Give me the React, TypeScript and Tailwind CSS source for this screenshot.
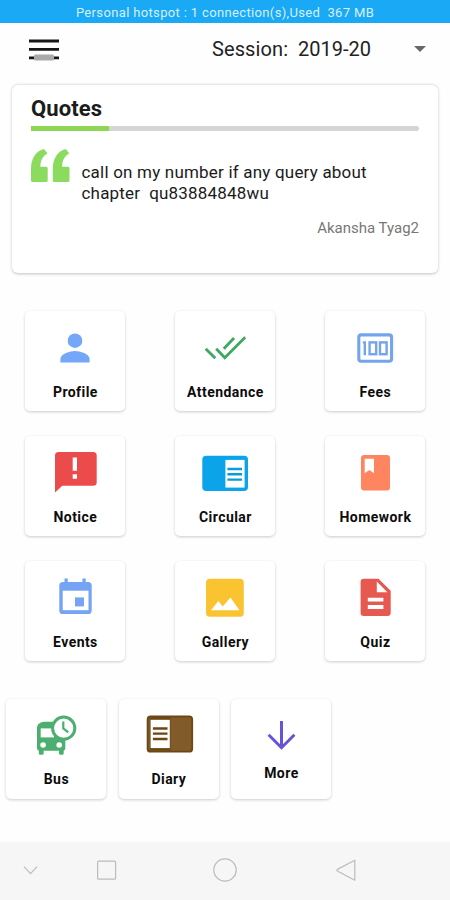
import type { ReactNode } from "react";

type TileProps = { label: string; icon: ReactNode; labelClass?: string };

function Icon({ children }: { children: ReactNode }) {
  return (
    <svg viewBox="0 0 60 60" className="mt-[7px] size-[60px] shrink-0" fill="none">
      {children}
    </svg>
  );
}

function Tile({ label, icon, labelClass = "mt-[6px]" }: TileProps) {
  return (
    <div className="flex h-[100px] w-[100px] flex-col items-center rounded-[5px] bg-white shadow-[0_1px_3px_rgba(0,0,0,0.2)]">
      <Icon>{icon}</Icon>
      <span className={`pl-[0.8px] text-[14px] leading-[16px] font-bold tracking-[0.45px] whitespace-nowrap text-[#0c0c0c] ${labelClass}`}>
        {label}
      </span>
    </div>
  );
}

const profile = (
  <g fill="#74a7f8">
    <circle cx="30" cy="22.7" r="7.3" />
    <path d="M15.4 44.5v-3.6c0-4.9 9.7-7.9 14.6-7.9s14.6 3 14.6 7.9v3.6z" />
  </g>
);

const attendance = (
  <g stroke="#3fa860" strokeWidth="2.8">
    <path d="M10.7 30.7 20.3 40.3M21.2 30.7l8.6 9L50.2 19.3M28.8 30.8 39 20" />
  </g>
);

const fees = (
  <g stroke="#74a4ee">
    <rect x="13.8" y="16.9" width="32.8" height="26.4" rx="2.5" strokeWidth="3.1" />
    <path d="M17.8 24.4h2v12.8" strokeWidth="2.4" />
    <rect x="24.6" y="24.4" width="6.6" height="11.8" strokeWidth="2.4" />
    <rect x="35" y="24.4" width="6.6" height="11.8" strokeWidth="2.4" />
  </g>
);

const notice = (
  <>
    <path d="M10 12.5A3.5 3.5 0 0 1 13.5 9h34.7a3.5 3.5 0 0 1 3.5 3.5v26.7a3.5 3.5 0 0 1-3.5 3.5H17.3L10 49.6z" fill="#eb4b4b" />
    <path d="M27.7 14.5H32v13.2h-4.3zM27.7 31.3H32v4.4h-4.3z" fill="#fff" />
  </>
);

const circular = (
  <>
    <rect x="7.3" y="12.7" width="45.7" height="35.4" rx="4" fill="#0ba4ea" />
    <path d="M30.4 16.9h19.2v27.7H30.4z" fill="#fff" />
    <path d="M32.4 26H47M32.4 31.3H47M32.4 36.6H47" stroke="#0b9bdc" strokeWidth="2.4" />
  </>
);

const homework = (
  <>
    <rect x="16" y="12.1" width="29" height="35.3" rx="3.2" fill="#fe8560" />
    <path d="M19.7 15.8H29v14.4L24.4 27l-4.7 3.2z" fill="#fff" />
  </>
);

const events = (
  <>
    <path d="M19.5 10.4h3.3V14h14.6v-3.6h3.3V14h2.4a3.6 3.6 0 0 1 3.6 3.6v24.8a3.6 3.6 0 0 1-3.6 3.6H17.9a3.6 3.6 0 0 1-3.6-3.6V17.6a3.6 3.6 0 0 1 3.6-3.6h1.6z" fill="#74a4f3" />
    <path d="M17.7 22.7h25.8v19.5H17.7z" fill="#fff" />
    <path d="M30 29.4h9v9h-9z" fill="#74a4f3" />
  </>
);

const gallery = (
  <>
    <rect x="11" y="10.7" width="37.8" height="38" rx="3.8" fill="#fac431" />
    <path d="m16 42.3 7.3-9.3 4.4 5.6 7.8-9L44.4 42.3z" fill="#fff" />
  </>
);

const quiz = (
  <>
    <path d="M18.9 10.7h14.6l12.2 12.1v22a3.3 3.3 0 0 1-3.3 3.3H18.9a3.3 3.3 0 0 1-3.3-3.3V14a3.3 3.3 0 0 1 3.3-3.3z" fill="#e65850" />
    <path d="M31.8 13.6v10.6h10.6zM22.8 29.7h15.6v3.8H22.8zM22.8 37.1h15.6v3.8H22.8z" fill="#fff" />
  </>
);

const bus = (
  <>
    <path d="M11 22c0-4.5 4-6.3 9-6.3h19.3v26.5a3 3 0 0 1-1.6 2.6v2.4a1.5 1.5 0 0 1-1.5 1.5h-1.7a1.5 1.5 0 0 1-1.5-1.5v-2.4H17.7v2.4a1.5 1.5 0 0 1-1.5 1.5h-1.9a1.5 1.5 0 0 1-1.5-1.5v-2.4A3 3 0 0 1 11 42.2z" fill="#4caf70" />
    <path d="M14.7 22.4H28v9H14.7z" fill="#fff" />
    <circle cx="17.1" cy="39" r="2.8" fill="#fff" />
    <circle cx="33.2" cy="39" r="2.8" fill="#fff" />
    <circle cx="37.7" cy="22.2" r="11.1" fill="#fff" stroke="#4caf70" strokeWidth="3" />
    <path d="M37.3 15.5v7l5 3.8" stroke="#4caf70" strokeWidth="2.2" />
  </>
);

const diary = (
  <>
    <rect x="8.6" y="10.5" width="44.6" height="35.2" rx="3" fill="#825b2b" stroke="#6b4714" strokeWidth="1.8" />
    <path d="M10.9 11.2h20.6v33.4H10.9z" fill="#6b4714" />
    <path d="M11.6 13.8h19.2v28.3H11.6z" fill="#fff" />
    <path d="M13.9 22.5h14.6M13.9 27.7h14.6M13.9 33h14.6" stroke="#6b4714" strokeWidth="2.3" />
  </>
);

const more = (
  <path d="M30.5 15v27M17.6 28.8l12.9 12.9 12.9-12.9" stroke="#6653d9" strokeWidth="3" />
);

export default function App() {
  return (
    <div className="flex h-[900px] w-[450px] flex-col overflow-hidden bg-[#fefefe] font-[Roboto,sans-serif]">
      <div className="flex h-[23px] shrink-0 items-center justify-center bg-[#1aa9f5] pt-[2px] text-[13px] leading-[16px] tracking-[0.35px] whitespace-pre text-[#d6f0ff]">
        Personal hotspot : 1 connection(s),Used  367 MB
      </div>

      <header className="flex h-[62px] shrink-0 items-center pr-[24px] pb-[11px] pl-[29px] text-[20px] text-[#222]">
        <svg viewBox="0 0 30 24" className="h-6 w-[30px]" fill="none">
          <path d="M0 4h30M0 12.3h30M0 20.8h30" stroke="#161616" strokeWidth="2.8" />
          <rect x="5" y="17.5" width="20" height="6" rx="1.5" fill="#aaa" />
        </svg>
        <span className="ml-[153px] w-[86px] tracking-[0.1px] whitespace-nowrap">Session:</span>
        <span className="whitespace-nowrap">2019-20</span>
        <svg viewBox="0 0 12 6" className="ml-auto h-[6px] w-[12px]">
          <path d="M0 0h12L6 6z" fill="#686868" />
        </svg>
      </header>

      <section className="mx-[12px] flex h-[188px] shrink-0 flex-col rounded-[6px] bg-white px-[19px] shadow-[0_0.5px_3px_rgba(0,0,0,0.24)]">
        <h1 className="mt-[11px] text-[22px] leading-[26px] font-bold tracking-[0.1px] text-[#1c1c1c]">Quotes</h1>
        <div className="mt-[4px] h-[5px] overflow-hidden rounded-r-sm bg-[#d5d5d5]">
          <div className="h-full w-[78px] bg-[#8dd755]" />
        </div>
        <div className="flex pt-[18px]">
          <svg viewBox="0 0 40 34" className="h-[34px] w-10 shrink-0" fill="#8bdc5e">
            <path d="M13 0l3.5 4.4C11.6 7.2 9.5 11 9.4 17.7h5.8a1.5 1.5 0 0 1 1.5 1.5v12.3a1.5 1.5 0 0 1-1.5 1.5H1.5A1.5 1.5 0 0 1 0 31.5V20C0 9.6 4.5 2.2 13 0z" />
            <path d="M34.8 0l3.5 4.4c-4.9 2.8-7 6.6-7.1 13.3H37a1.5 1.5 0 0 1 1.5 1.5v12.3A1.5 1.5 0 0 1 37 33H23.3a1.5 1.5 0 0 1-1.5-1.5V20C21.8 9.6 26.3 2.2 34.8 0z" />
          </svg>
          <p className="mt-[13px] ml-[10.5px] text-[17px] leading-[20.5px] tracking-[0.2px] whitespace-pre text-[#1b1b1b]">
            {"call on my number if any query about\nchapter  qu83884848wu"}
          </p>
        </div>
        <p className="mt-[15px] text-right text-[15px] leading-[20px] text-[#777]">Akansha Tyag2</p>
      </section>

      <main className="mt-[38px] grid shrink-0 grid-cols-[repeat(3,100px)] gap-x-[50px] gap-y-[25px] pl-[25px]">
        <Tile label="Profile" icon={profile} />
        <Tile label="Attendance" icon={attendance} />
        <Tile label="Fees" icon={fees} />
        <Tile label="Notice" icon={notice} />
        <Tile label="Circular" icon={circular} />
        <Tile label="Homework" icon={homework} />
        <Tile label="Events" icon={events} />
        <Tile label="Gallery" icon={gallery} />
        <Tile label="Quiz" icon={quiz} />
      </main>

      <div className="mt-[38px] flex shrink-0 gap-[12.5px] pl-[6px]">
        <Tile label="Bus" icon={bus} labelClass="mt-[5px]" />
        <Tile label="Diary" icon={diary} labelClass="mt-[5px]" />
        <Tile label="More" icon={more} labelClass="-mt-px" />
      </div>

      <nav className="mt-auto h-[58px] shrink-0 bg-[#f6f6f6]">
        <svg viewBox="0 0 450 58" className="h-[58px] w-[450px]" fill="none" stroke="#bcbcbc" strokeWidth="1.2">
          <path d="m24 24.7 6.5 7 6.5-7" />
          <rect x="97.6" y="19.2" width="18" height="18" rx="1" />
          <circle cx="225" cy="28" r="11.2" />
          <path d="M354.8 18.2v20l-17.4-9.2q-1-.8 0-1.6z" strokeLinejoin="round" />
        </svg>
      </nav>
    </div>
  );
}
